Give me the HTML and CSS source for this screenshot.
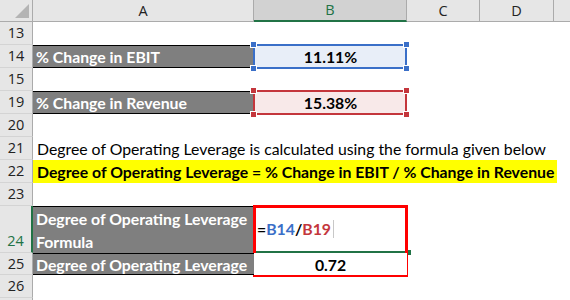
FILE: index.html
```html
<!DOCTYPE html>
<html lang="en">

<head>
	<meta charset="UTF-8">
	<title>Degree of Operating Leverage</title>
	<link rel="stylesheet" href="styles.css">
</head>

<body>
	<div class="sheet">
		<!-- column headers -->
		<div class="corner"><span class="corner-tri"></span></div>
		<div class="col-head">A</div>
		<div class="col-head selected">B</div>
		<div class="col-head">C</div>
		<div class="col-head">D</div>
		<div class="col-head last"></div>

		<!-- 13 -->
		<div class="row-head">13</div>
		<div class="cell span-all"></div>

		<!-- 14 -->
		<div class="row-head">14</div>
		<div class="cell label">% Change in EBIT</div>
		<div class="cell value ref-blue">11.11%
			<span class="range blue">
				<i class="handle tl"></i><i class="handle tr"></i><i class="handle bl"></i><i class="handle br"></i>
			</span>
		</div>
		<div class="cell span-rest"></div>

		<!-- 15 -->
		<div class="row-head">15</div>
		<div class="cell span-all"></div>

		<!-- 19 -->
		<div class="row-head">19</div>
		<div class="cell label">% Change in Revenue</div>
		<div class="cell value ref-red">15.38%
			<span class="range red">
				<i class="handle tl"></i><i class="handle tr"></i><i class="handle bl"></i><i class="handle br"></i>
			</span>
		</div>
		<div class="cell span-rest"></div>

		<!-- 20 -->
		<div class="row-head">20</div>
		<div class="cell span-all"></div>

		<!-- 21 -->
		<div class="row-head">21</div>
		<div class="cell span-all note">Degree of Operating Leverage is calculated using the formula given below</div>

		<!-- 22 -->
		<div class="row-head">22</div>
		<div class="cell span-all"><span class="highlight">Degree of Operating Leverage = % Change in EBIT / % Change in Revenue</span></div>

		<!-- 23 -->
		<div class="row-head">23</div>
		<div class="cell span-all"></div>

		<!-- 24 -->
		<div class="row-head tall active">24</div>
		<div class="cell label wrap">Degree of Operating Leverage Formula</div>
		<div class="cell editing">
			<span class="f-eq">=</span><span class="f-blue">B14</span><span class="f-eq">/</span><span class="f-red">B19</span><span class="caret"></span>
			<span class="fill-handle"></span>
			<span class="annotation"></span>
		</div>
		<div class="cell span-rest"></div>

		<!-- 25 -->
		<div class="row-head">25</div>
		<div class="cell label">Degree of Operating Leverage</div>
		<div class="cell value plain">0.72</div>
		<div class="cell span-rest"></div>

		<!-- 26 -->
		<div class="row-head">26</div>
		<div class="cell span-all"></div>

		<!-- 27 (cut off by the window) -->
		<div class="row-head"></div>
		<div class="cell span-all"></div>
	</div>
</body>

</html>
```

FILE: styles.css
```css
body {
	margin: 0;
	background: #fff;
	font-family: 'Lato', 'Open Sans', sans-serif;
	font-size: 15.8px;
	color: #000;
	overflow: hidden;
}

.sheet {
	display: grid;
	grid-template-columns: 33px 221px 153px 73px 74px 16px;
	grid-template-rows: 22px repeat(8, 23px) 47px 22px 23px 23px;
	width: 570px;
}

/* headers */
.corner {
	background: #e6e6e6;
	border-right: 1px solid #ababab;
	border-bottom: 1px solid #ababab;
	position: relative;
}

.corner-tri {
	position: absolute;
	right: 3px;
	bottom: 3px;
	width: 0;
	height: 0;
	border-left: 14px solid transparent;
	border-bottom: 14px solid #b4b4b4;
}

.col-head {
	background: #e6e6e6;
	border-right: 1px solid #ababab;
	border-bottom: 1px solid #ababab;
	text-align: center;
	line-height: 21px;
	color: #222;
	font-family: 'Open Sans', sans-serif;
	font-size: 14.5px;
}

.col-head.selected {
	background: #d2d2d2;
	color: #217346;
	border-bottom: 2px solid #217346;
	line-height: 20px;
}

.col-head.last {
	border-right: none;
}

.row-head {
	background: #e6e6e6;
	border-right: 1px solid #ababab;
	border-bottom: 1px solid #d4d4d4;
	text-align: center;
	line-height: 22px;
	color: #222;
	font-family: 'Open Sans', sans-serif;
	font-size: 14.5px;
}

.row-head.tall {
	display: flex;
	align-items: flex-end;
	justify-content: center;
}

.row-head.active {
	color: #217346;
	border-right: 2px solid #217346;
}

/* cells */
.cell {
	position: relative;
	display: flex;
	align-items: center;
	padding: 0 3px;
	white-space: nowrap;
}

.span-all {
	grid-column: 2 / 7;
}

.span-rest {
	grid-column: 4 / 7;
}

.label {
	background: #7f7f7f;
	color: #fff;
	font-weight: bold;
	border-top: 1px solid #000;
	border-bottom: 1px solid #000;
}

.label.wrap {
	white-space: normal;
	align-items: flex-end;
	line-height: 23px;
	padding-bottom: 0;
	border-bottom: none;
}

.value {
	justify-content: center;
	font-weight: bold;
}

.ref-blue {
	background: #e8eef8;
}

.ref-red {
	background: #f8e9e9;
}

.range {
	position: absolute;
	inset: -1px 0 -1px -1px;
	border: 2px solid;
}

.range.blue {
	border-color: #3a6fc8;
	color: #3a6fc8;
}

.range.red {
	border-color: #c4363c;
	color: #c4363c;
}

.handle {
	position: absolute;
	width: 5px;
	height: 5px;
	background: currentColor;
	outline: 1px solid #fff;
}

.handle.tl { left: -4px; top: -4px; }
.handle.tr { right: -4px; top: -4px; }
.handle.bl { left: -4px; bottom: -4px; }
.handle.br { right: -4px; bottom: -4px; }

.note {
	padding-left: 4px;
}

.highlight {
	background: #ffff00;
	font-weight: bold;
	margin-left: -3px;
	padding: 0 4px;
	line-height: 23px;
	display: inline-block;
	width: 516px;
}

.editing {
	font-weight: bold;
	padding-left: 3px;
	border-bottom: 2px solid #217346;
}

.f-blue {
	color: #3a6fc8;
}

.f-red {
	color: #c4363c;
}

.caret {
	display: inline-block;
	width: 1px;
	height: 18px;
	margin-left: 2px;
	background: #c8c8c8;
}

.fill-handle {
	position: absolute;
	right: -4px;
	bottom: -4px;
	width: 5px;
	height: 5px;
	background: #217346;
	outline: 1px solid #fff;
}

.annotation {
	position: absolute;
	left: -1px;
	top: -1px;
	width: 149px;
	height: 66px;
	border: 3px solid #ff0000;
}

.plain {
	background: #fff;
}
```
